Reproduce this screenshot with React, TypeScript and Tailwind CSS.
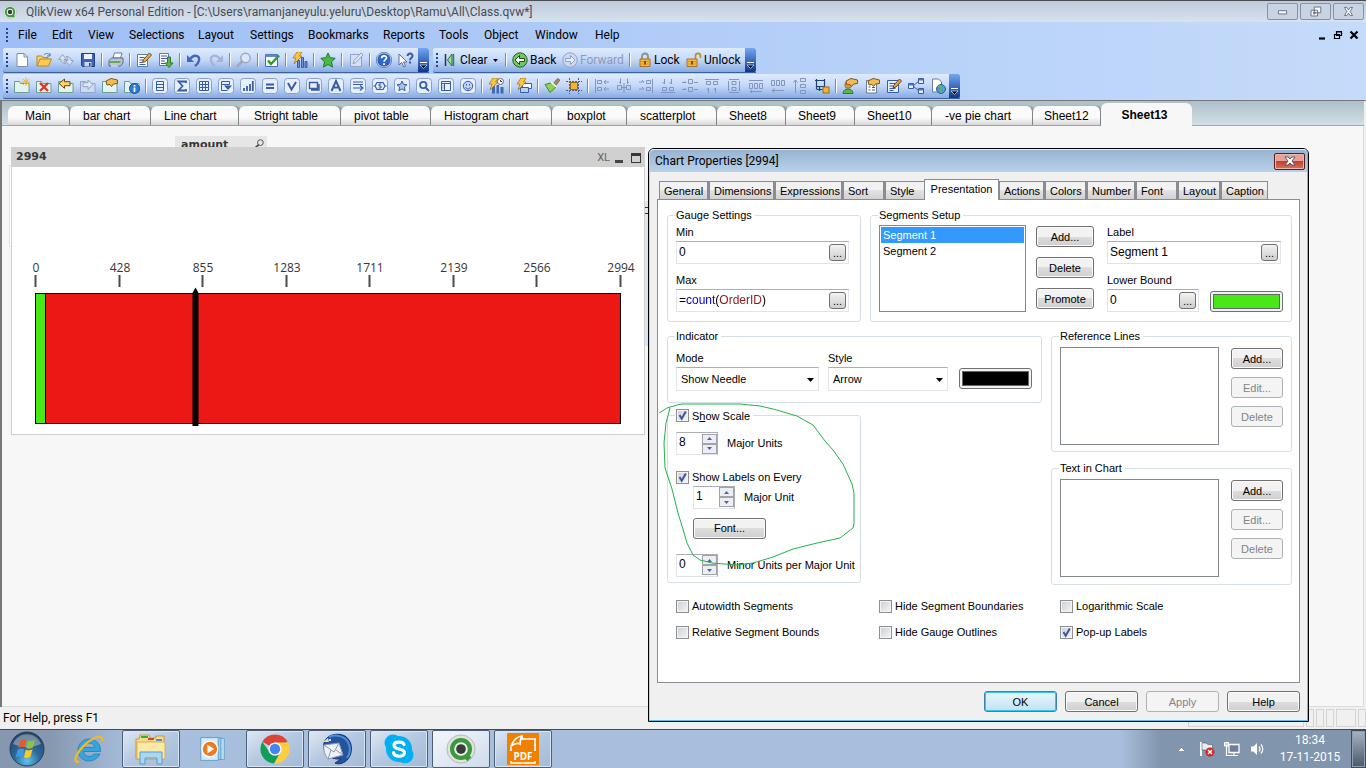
import React, { useState } from "react";

type Kids = { children?: React.ReactNode };

const UI = "font-['Roboto','Open_Sans',sans-serif]";
const SANS = "font-['Liberation_Sans',Arial,sans-serif]";

/* ---------- Icons ---------- */

function Svg({ children, s = "size-4" }: Kids & { s?: string }) {
  return (
    <svg viewBox="0 0 16 16" className={s} fill="none" aria-hidden="true">
      {children}
    </svg>
  );
}

function Boxed({ children }: Kids) {
  return (
    <Svg>
      <rect x="0.5" y="0.5" width="15" height="15" rx="3" fill="#e6effc" stroke="#8ba0c8" />
      {children}
    </Svg>
  );
}

const B = "#3a5ba8";
const D = "#8fa3c8";

const QlikLogo = ({ s = "size-4" }: { s?: string }) => (
  <svg viewBox="0 0 32 32" className={s} fill="none" aria-hidden="true">
    <circle cx="16" cy="16" r="15" fill="#dfe2df" stroke="#b2b6b2" />
    <path d="M19 21l6 6" stroke="#3a9a3c" strokeWidth="6" />
    <circle cx="16" cy="16" r="9.500" fill="#f4f4f4" stroke="#3a9a3c" strokeWidth="4.500" />
    <circle cx="16" cy="16" r="5.200" fill="#3c3c3c" />
  </svg>
);

const NewDoc = () => (
  <Svg>
    <path d="M3 1.500h7l3.500 3.500v9.500h-10.500z" fill="#fff" stroke="#7f8ea6" />
    <path d="M10 1.500v3.500h3.500" stroke="#7f8ea6" />
  </Svg>
);
const Open = () => (
  <Svg>
    <path d="M1 14V4h5l1 1.500h5V8" fill="#f5d27a" stroke="#b98a24" />
    <path d="M1 14l3-7h11.500l-3 7z" fill="#ffc94e" stroke="#b98a24" />
    <path d="M8 3c2-2.500 5-2 6 1m0-3v3h-3" stroke="#4d7fc4" />
  </Svg>
);
const Refresh = () => (
  <Svg>
    <path d="M0.500 7.500L4.500 2.500l4 5H6c0 2 .5 3 2 4-3 0-5-1.500-5-4z" fill="#dbe3f0" stroke={D} />
    <path d="M15.500 8.500l-4 5-4-5H10c0-2-.5-3-2-4 3 0 5 1.500 5 4z" fill="#dbe3f0" stroke={D} />
  </Svg>
);
const Save = () => (
  <Svg>
    <path d="M1.500 1.500h13v13h-12l-1-1z" fill="#3f63b5" stroke="#253f86" />
    <path d="M4 2h8v5H4z" fill="#eef3fb" />
    <path d="M4.500 10h7v4.500h-7z" fill="#cdd8ee" />
    <path d="M9 11h1.500v3H9z" fill="#253f86" />
  </Svg>
);
const Print = () => (
  <Svg>
    <path d="M5 6l1.500-5H14l-1.500 5z" fill="#fff" stroke="#6d7d95" />
    <path d="M1 8.500L3.500 6H15v5l-2.500 3H1z" fill="#b9c5d8" stroke="#5e6d85" />
    <path d="M1 9h11.500v2H1z" fill="#5fae4f" />
    <path d="M3 14h7" stroke="#fff" />
  </Svg>
);
const EditScript = () => (
  <Svg>
    <path d="M1.500 2.500h10v12h-10z" fill="#fff" stroke="#5d7bb5" />
    <path d="M3.500 5.500h5M3.500 8h4M3.500 10.500h3M3.500 12.500h6" stroke={B} />
    <path d="M6.500 10.500l1-3 6-6.500 2 2-6 6.500z" fill="#e7b445" stroke="#6b4a18" />
  </Svg>
);
const ExportDown = () => (
  <Svg>
    <path d="M1.500 1.500h9v12h-9z" fill="#fff" stroke="#5d7bb5" />
    <path d="M3 4h6M3 6.500h6M3 9h4M3 11.500h4" stroke={B} />
    <path d="M9.500 5h3v6h2.500l-4 4.500L7 11h2.500z" fill="#5fb34a" stroke="#2e7a25" />
  </Svg>
);
const Undo = () => (
  <Svg>
    <path d="M4 7c4-5.500 10-3.500 9 1.500-.4 2.500-2 4-4 5.500" stroke="#4467bd" strokeWidth="2.400" />
    <path d="M1 3v7h7z" fill="#4467bd" />
  </Svg>
);
const Redo = () => (
  <Svg>
    <path d="M12 7C8 1.500 2 3.500 3 8.500c.400 2.500 2 4 4 5.500" stroke="#a5b4d2" strokeWidth="2.200" />
    <path d="M15 3v7H8z" fill="#a5b4d2" />
  </Svg>
);
const Search = () => (
  <Svg>
    <circle cx="9.500" cy="6" r="4.700" fill="#dce8f8" stroke="#98a9c8" strokeWidth="1.500" />
    <path d="M6 9.500L1.500 14" stroke="#a9a6b4" strokeWidth="2.600" strokeLinecap="round" />
  </Svg>
);
const CheckBoxIcon = () => (
  <Svg>
    <path d="M1.500 2.500h12v12h-12z" fill="#fff" stroke="#4a6cb0" />
    <path d="M1.500 2.500h12V5h-12z" fill="#5f86cf" />
    <path d="M4 8.500l3 3.500 8-8.500" stroke="#2c9a2c" strokeWidth="2.500" />
  </Svg>
);
const Bolt = () => <path d="M5 0h5L7.500 4H10L2 12l2-6H1z" fill="#ffc53d" stroke="#a8781c" strokeWidth="0.800" />;
const QuickChart = () => (
  <Svg>
    <path d="M5.500 8.500h2v7h-2zM9.500 5.500h2v10h-2zM13 9.500h2v6h-2z" fill="#6f93d8" stroke={B} />
    <Bolt />
  </Svg>
);
const Star = () => (
  <Svg>
    <path d="M8 1l2.200 4.700 5 .6-3.700 3.500 1 5.200L8 12.500 3.500 15l1-5.200L.8 6.300l5-.6z" fill="#4db84a" stroke="#1f7a24" />
  </Svg>
);
const Note = () => (
  <Svg>
    <path d="M2.500 2.500h11v12h-11z" fill="#d6e1f3" stroke={D} />
    <path d="M5 12l1-3.500 7-7.500 2 2-7 7.500z" fill="#dfe7f4" stroke={D} />
  </Svg>
);
const HelpIcon = () => (
  <Svg>
    <circle cx="8" cy="8" r="7.200" fill="#2f66c4" stroke="#e6eefb" />
    <circle cx="8" cy="8" r="7.700" stroke="#4c618e" strokeWidth="0.700" />
    <path d="M5.600 6.300C5.700 3 10.600 3.200 10.400 6c-.1 1.600-2.400 1.800-2.400 3.800M8 11.200v1.800" stroke="#fff" strokeWidth="1.800" />
  </Svg>
);
const WhatsThis = () => (
  <Svg>
    <path d="M1 2v11l2.800-2.500 2 4.500 1.700-.8-2-4.200H9z" fill="#fff" stroke="#5c6f95" />
    <path d="M9.500 4c.2-3.500 5.500-3 5 .2-.3 1.800-2.500 2-2.500 4M12 9.500v2" stroke={B} strokeWidth="2" />
  </Svg>
);
const ClearIcon = () => (
  <Svg>
    <path d="M3.500 2v12" stroke="#333" strokeWidth="1.500" />
    <path d="M5.500 8l4.500-6v12z" fill="#9fe0a0" stroke="#2b6a38" />
    <path d="M11.500 2v12" stroke="#2f8a4c" strokeWidth="1.500" />
  </Svg>
);
const BackIcon = () => (
  <Svg>
    <circle cx="8" cy="8" r="7.200" fill="#6fc95e" stroke="#2a5c2a" />
    <path d="M3 8l4.500-4.500v3h5v3h-5v3z" fill="#fff" stroke="#1d4d1d" />
  </Svg>
);
const ForwardIcon = () => (
  <Svg>
    <circle cx="8" cy="8" r="7.200" fill="#cdd9ee" stroke={D} />
    <path d="M13 8L8.500 3.500v3h-5v3h5v3z" fill="#e6edf8" stroke={D} />
  </Svg>
);
const LockIcon = () => (
  <Svg>
    <path d="M5 7V4.500c0-4 6-4 6 0V7" stroke="#8a8f9a" strokeWidth="1.800" />
    <path d="M3 7h10v7.500H3z" fill="#f7b93a" stroke="#a8721a" />
    <path d="M3.500 9.500h9M3.500 12h9" stroke="#d8922a" />
    <path d="M8 9v3.500" stroke="#5b3c10" strokeWidth="1.600" />
  </Svg>
);
const UnlockIcon = () => (
  <Svg>
    <path d="M9.500 7V4c0-3.500 5-3.500 5 0v2" stroke="#c08b2a" strokeWidth="1.600" />
    <path d="M1 7h10v7.500H1z" fill="#f7b93a" stroke="#a8721a" />
    <path d="M1.500 9.500h9M1.500 12h9" stroke="#d8922a" />
    <path d="M6 9v3.500" stroke="#5b3c10" strokeWidth="1.600" />
  </Svg>
);

const Sheet = () => <path d="M0.500 14.500v-11h5l1 2h8.500v9z" fill="#e3f3ee" stroke="#6f9c94" />;
const AddSheet = () => (
  <Svg>
    <Sheet />
    <path d="M12 0v8M8 4h8M9.200 1.200l5.600 5.600M14.800 1.200L9.200 6.800" stroke="#f2b52a" />
  </Svg>
);
const DeleteSheet = () => (
  <Svg>
    <Sheet />
    <path d="M4 5l8 8M12 5l-8 8" stroke="#dc3a22" strokeWidth="2.400" />
  </Svg>
);
const PromoteSheet = () => (
  <Svg>
    <Sheet />
    <path d="M1 5.500L6.500 1v2.700H12v4H6.500v2.600z" fill="#ffd65c" stroke="#6b4a18" />
  </Svg>
);
const DemoteSheet = () => (
  <Svg>
    <path d="M0.500 14.500v-11h5l1 2h8.500v9z" fill="#cfdcf0" stroke={D} />
    <path d="M13 6.500L8 2v2.700H3v4h5v2.600z" fill="#dde6f4" stroke={D} />
  </Svg>
);
const Hand = () => <path d="M4 3l5-2.500 6.500 1.500v3.500l-4 .5-2 2.500-1.500-2L5 7z" fill="#f2bc52" stroke="#7c5718" />;
const SheetProps = () => (
  <Svg>
    <Sheet />
    <Hand />
  </Svg>
);
const SheetInfo = () => (
  <Svg>
    <Sheet />
    <circle cx="10.500" cy="10.500" r="5" fill="#2e7bd6" stroke="#1a4f96" />
    <path d="M10.500 7v1.500M10.500 9.500V14" stroke="#fff" strokeWidth="1.800" />
  </Svg>
);

const boxedIcons: [string, React.ReactNode][] = [
  ["List box", <path key="a" d="M4.500 3.500h7v9h-7zM4.500 6.500h7M4.500 9.500h7" stroke={B} />],
  ["Statistics box", <path key="a" d="M12 5V3.500H4.500L8.500 8l-4 4.500H12V11" stroke={B} strokeWidth="1.800" />],
  ["Table box", <path key="a" d="M3.500 3.500h9v9h-9zM3.500 6.500h9M3.500 9.500h9M6.500 3.500v9M9.500 3.500v9" stroke={B} />],
  ["Multi box", <g key="a"><path d="M3.500 3.500h8v3h-8zM3.500 6.500v6h6" stroke={B} /><path d="M6 7.500h8L10 12z" fill={B} /></g>],
  ["Chart", <path key="a" d="M4 13v-3M7 13V8M10 13V6M12.800 13V3" stroke={B} strokeWidth="1.800" />],
  ["Input box", <path key="a" d="M4 6.500h8M4 10h8" stroke={B} strokeWidth="1.800" />],
  ["Current selections", <path key="a" d="M4 5l3.500 6.500L12 4" stroke={B} strokeWidth="2" />],
  ["Button", <path key="a" d="M3.500 4.500h8v6h-8zM5 12h8V6" stroke={B} strokeWidth="1.400" />],
  ["Text object", <path key="a" d="M3.500 13L8 3l4.500 10M5.500 9.500h5" stroke={B} strokeWidth="2" />],
  ["Line arrow", <path key="a" d="M3 4h10M3 6.500h10M3 10h9M10 7.500l3 2.500-3 2.500" stroke={B} strokeWidth="1.200" />],
  ["Slider", <g key="a"><path d="M5 4.500h6l2 3.500-2 3.500H5L3 8zM1.500 8h1M13.500 8h1" stroke={B} strokeWidth="1.200" /><path d="M9.500 6H7v2h2v2H6.500" stroke={B} /></g>],
  ["Bookmark object", <path key="a" d="M8 3l1.500 3.300 3.500.4-2.600 2.400.7 3.600L8 10.900l-3.100 1.800.7-3.600L3 6.700l3.500-.4z" fill="#a9c2ee" stroke={B} />],
  ["Search object", <path key="a" d="M9.500 9.500L13 13M10.500 7a3.200 3.200 0 1 1-6.400 0 3.200 3.200 0 0 1 6.400 0z" stroke={B} strokeWidth="1.800" />],
  ["Container", <path key="a" d="M3.500 3.500h9v9h-9zM3.500 5.500h9M6.500 5.500v7M4.500 8h1M4.500 10h1" stroke={B} />],
  ["Custom object", <g key="a"><circle cx="8" cy="8" r="4.700" fill="#c3d5f3" stroke={B} /><path d="M5.500 9c1 2.500 4 2.500 5 0M6.500 6v1.500M9.500 6v1.500" stroke={B} /></g>],
];

const TimeChart = () => (
  <Svg>
    <path d="M4 8h3v7.500H4zM8.500 7h2.500v8.500H8.500zM12.500 9h3v6.500h-3z" fill="#3f68b8" />
    <circle cx="12.500" cy="3.500" r="3" fill="#fff" stroke="#666" />
    <path d="M12.500 2v1.500H14" stroke="#333" />
    <Bolt />
  </Svg>
);
const QuickWindow = () => (
  <Svg>
    <path d="M6.500 5.500h9v5h-9z" fill="#fff" stroke={B} />
    <path d="M4.500 9.500h8v5h-8z" fill="#bcd0f2" stroke={B} />
    <Bolt />
  </Svg>
);
const Brush = () => (
  <Svg>
    <path d="M9 6l4.500-5.500L16 2l-4.500 6z" fill="#a88a5a" stroke="#6b5a38" strokeWidth="0.700" />
    <path d="M1 6.500l5 8L12 9 8 4.500z" fill="#8bd05c" stroke="#3f8a2c" />
    <path d="M7 4l5.500 5" stroke="#fff" strokeWidth="1.500" />
  </Svg>
);
const DesignGrid = () => (
  <Svg>
    <path d="M3.500 0v16M12.500 0v16M0 3.500h16M0 12.500h16" stroke="#4a5f88" strokeDasharray="2 1" />
    <rect x="4.500" y="4.500" width="7" height="7" fill="#f3b13a" stroke="#9a6a16" />
  </Svg>
);

const alignPaths = [
  "M1.500 1v14M3.500 2.500h4v3h-4zM3.500 9.500h4v3h-4zM15 4H10l2-2M10 4l2 2M15 11H10l2-2M10 11l2 2",
  "M1.500 7.500h4v4h-4zM10.500 7.500h4v4h-4zM8 5v10M4.500 0.500v5l-1.500-1.500M11.500 0.500v5l1.500-1.500M5.500 9.500h5",
  "M14.500 1v14M8.500 2.500h4v3h-4zM8.500 9.500h4v3h-4zM1 4h5L4 2M1 11h5L4 9",
  "M1 14.500h14M2.500 9.500h4v3h-4zM9.500 9.500h4v3h-4zM4.500 1v5l-2-2M11.500 1v5l-2-2",
  "M6.500 1.500h4v4h-4zM6.500 9.500h4v4h-4zM0 4.500h4L2.500 3M0 11.500h4L2.500 10M16 4.500h-4M16 11.500h-4",
  "M1 1.500h14M2.500 3.500h4v3h-4zM9.500 3.500h4v3h-4zM4.500 15v-5l-2 2M11.500 15v-5l-2 2",
  "M3 1.500h10M3 14.500h10M6 3.500h4v3h-4zM6 9.500h4v3h-4zM2.500 3v10M13.500 3v10",
  "M1 2.500h14M1.500 5.500h3v5h-3zM6.500 5.500h3v5h-3zM11.500 5.500h3v5h-3zM2 13.500h12M4 12l-2 1.500L4 15",
  "M1.500 2.500h3v5h-3zM6.500 2.500h3v5h-3zM11.500 2.500h3v5h-3zM14 12.500H2M4.500 10.500l-2.500 2 2.500 2",
  "M3.500 15V2M1.500 4.500L3.500 2l2 2.500M8.500 0.500h5v3h-5zM8.500 6.500h5v3h-5zM8.500 12.500h5v3h-5z",
];

const LayoutIcon = () => (
  <Svg>
    <path d="M1 2.500h10M2.500 1v10M2.500 8.500h8M10.500 1v9M2.500 11.500h6M5.500 8v5" stroke="#20406f" strokeWidth="1.200" />
    <rect x="9" y="9" width="6" height="6" fill="#f3b13a" stroke="#9a6a16" />
  </Svg>
);
const UserPrefs = () => (
  <Svg>
    <circle cx="6" cy="7" r="3.200" fill="#f29a4a" stroke="#b0601c" />
    <path d="M1 15.500c0-6 10-6 10 0z" fill="#58b848" stroke="#2b7a24" />
    <Hand />
  </Svg>
);
const DocProps = () => (
  <Svg>
    <path d="M2.500 2.500h10v12.500h-10z" fill="#fff" stroke="#6d7d95" />
    <path d="M4.500 9h2M4.500 12h2M8 9.500h3M8 12h3" stroke={B} />
    <Hand />
  </Svg>
);
const ExpressionIcon = () => (
  <Svg>
    <path d="M1.500 2.500h11v12h-11z" fill="#e4edfb" stroke={B} />
    <path d="M3.500 5.500h6M3.500 8h4M3.500 10.500h6M3.500 12.500h4" stroke={B} />
    <path d="M7 10l1-3 5.500-6 2 2L10 9z" fill="#e7a04a" stroke="#6b4a18" />
  </Svg>
);
const TableViewer = () => (
  <Svg>
    <path d="M5 8l6-5M5 8l6 5" stroke={B} />
    <path d="M0.500 5.500h5v5h-5zM10.500 0.500h5v5h-5zM10.500 10.500h5v5h-5z" fill="#eaf1fc" stroke={B} />
    <path d="M1 6h4v1.500H1zM11 1h4v1.500h-4zM11 11h4v1.500h-4z" fill="#4a78d0" />
  </Svg>
);
const WebDoc = () => (
  <Svg>
    <path d="M2.500 1h6l3 3v10h-9z" fill="#fff" stroke="#6d7d95" />
    <circle cx="11" cy="11" r="4.500" fill="#4b93dd" stroke="#27609e" />
    <path d="M8 9c2-2 4-1 3 1s1 2 0 5M13 8.500c1 1 1 3 0 4" stroke="#5fc04f" strokeWidth="1.600" />
  </Svg>
);

/* ---------- Toolbar pieces ---------- */

function Tool({ label, children }: Kids & { label: string }) {
  return (
    <button type="button" aria-label={label} className="flex w-[22px] shrink-0 justify-center">
      {children}
    </button>
  );
}
const Sep = () => (
  <span className="flex w-[6px] shrink-0 justify-center">
    <span className="h-[14px] w-[2px] border-r border-white bg-[#6a8ccb]" />
  </span>
);
const Grip = () => (
  <span className="flex w-[8px] shrink-0 flex-col items-center gap-[2px]">
    {[0, 1, 2, 3].map((i) => (
      <span key={i} className="size-[2px] bg-[#27418a]" />
    ))}
  </span>
);
const Cap = () => (
  <button
    type="button"
    aria-label="Toolbar options"
    className="flex w-[11px] shrink-0 items-end justify-center self-stretch rounded-r-[2px] bg-linear-to-b from-[#75a6f1] to-[#0b3691] pb-[3px]"
  >
    <svg viewBox="0 0 7 7" className="size-[7px]" aria-hidden="true">
      <path d="M0 0h7v1H0z" fill="#fff" />
      <path d="M0 3h7L3.500 6.500z" fill="#000" stroke="#fff" strokeWidth="0.600" />
    </svg>
  </button>
);
const BAR =
  "flex h-[25px] items-center rounded-l-[2px] border-b border-[#3b619c] bg-linear-to-b from-[#dfebfd] via-[#c3d8f8] to-[#86aae3]";

const menus: [string, string][] = [
  ["File", "w-[34px]"],
  ["Edit", "w-[36px]"],
  ["View", "w-[41px]"],
  ["Selections", "w-[69px]"],
  ["Layout", "w-[52px]"],
  ["Settings", "w-[58px]"],
  ["Bookmarks", "w-[75px]"],
  ["Reports", "w-[56px]"],
  ["Tools", "w-[45px]"],
  ["Object", "w-[51px]"],
  ["Window", "w-[60px]"],
  ["Help", "w-[40px]"],
];

const sheets: [string, string][] = [
  ["Main", "w-[62px] pl-[17px]"],
  ["bar chart", "w-[81px] pl-[13px]"],
  ["Line chart", "w-[88px] pl-[13px]"],
  ["Stright table", "w-[102px] pl-[15px]"],
  ["pivot table", "w-[90px] pl-[13px]"],
  ["Histogram chart", "w-[121px] pl-[13px]"],
  ["boxplot", "w-[75px] pl-[15px]"],
  ["scatterplot", "w-[90px] pl-[13px]"],
  ["Sheet8", "w-[69px] pl-[12px]"],
  ["Sheet9", "w-[69px] pl-[12px]"],
  ["Sheet10", "w-[77px] pl-[12px]"],
  ["-ve pie chart", "w-[101px] pl-[13px]"],
  ["Sheet12", "w-[68px] pl-[11px]"],
];

/* ---------- Dialog controls ---------- */

function Btn({ children, w, disabled, primary }: Kids & { w: string; disabled?: boolean; primary?: boolean }) {
  const look = disabled
    ? "border-[#adb2b5] bg-[#f4f4f4] text-[#838383]"
    : primary
      ? "border-[#3c7fb1] bg-linear-to-b from-[#eaf6fd] to-[#bfe2f5] shadow-[inset_0_0_0_1px_#30c8f2] text-black"
      : "border-[#707070] bg-linear-to-b from-[#f2f2f2] from-50% via-[#dddddd] via-50% to-[#cfcfcf] shadow-[inset_0_0_0_1px_#fbfbfb] text-black";
  return (
    <button type="button" disabled={disabled} className={`h-[21px] shrink-0 rounded-[3px] border leading-[18px] ${look} ${w}`}>
      {children}
    </button>
  );
}

function Group({ title, className = "", children }: Kids & { title: React.ReactNode; className?: string }) {
  return (
    <fieldset className={`min-w-0 rounded-[3px] border border-[#d5dfe5] pl-[8px] ${className}`}>
      <legend className="-ml-px pr-[3px] pl-px leading-[12px]">{title}</legend>
      {children}
    </fieldset>
  );
}

function Check({ label, on }: { label: React.ReactNode; on?: boolean }) {
  return (
    <label className="flex items-center gap-[3px] whitespace-nowrap">
      <span className="relative size-[13px] shrink-0">
        <input
          type="checkbox"
          defaultChecked={on}
          className="peer block size-[13px] appearance-none border border-[#8e8f8f] bg-linear-to-br from-[#c9cfd6] to-[#f6f6f6] shadow-[inset_0_0_0_1px_#f4f4f4]"
        />
        <svg viewBox="0 0 13 13" className="pointer-events-none absolute inset-0 hidden size-[13px] peer-checked:block" fill="none" aria-hidden="true">
          <path d="M3.500 6l2.200 3.800L9.800 2.500" stroke="#3f579f" strokeWidth="2" />
        </svg>
      </span>
      <span>{label}</span>
    </label>
  );
}

function ExprField({ label, value, w, tint = "" }: { label: string; value: string; w: string; tint?: string }) {
  return (
    <div className={w}>
      <label htmlFor={label} className="block h-4 leading-4">
        {label}
      </label>
      <div className="mt-px flex h-[23px] items-center border border-[#e2e3ea] border-t-[#abadb3] bg-white pr-[2px]">
        <input
          id={label}
          defaultValue={value}
          className={`h-[19px] min-w-0 flex-1 pb-px pl-[2px] text-[12px] outline-none ${tint}`}
        />
        <button
          type="button"
          aria-label={`Edit ${label} expression`}
          className="flex size-[17px] items-end justify-center rounded-[3px] border border-[#707070] bg-linear-to-b from-[#f2f2f2] to-[#cfcfcf] pb-[3px] leading-[8px]"
        >
          ...
        </button>
      </div>
    </div>
  );
}

function Drop({ label, value, w }: { label: string; value: string; w: string }) {
  return (
    <label className={w}>
      <span className="block h-4 leading-4">{label}</span>
      <span className="relative mt-px block">
        <select className="block h-6 w-full appearance-none border border-[#e2e3ea] border-t-[#abadb3] bg-white pl-[4px] outline-none">
          <option>{value}</option>
        </select>
        <svg viewBox="0 0 7 4" className="pointer-events-none absolute top-[11px] right-[5px] h-[4px] w-[7px]" aria-hidden="true">
          <path d="M0 0h7L3.500 4z" fill="#000" />
        </svg>
      </span>
    </label>
  );
}

function Spin({ label, start }: { label: string; start: number }) {
  const [n, setN] = useState(start);
  const arrow = "flex h-[10px] w-[15px] items-center justify-center border border-[#a0a3aa] bg-[#eceef2]";
  return (
    <div className="flex items-center">
      <div className="flex h-[23px] w-[42px] items-center border border-[#e2e3ea] border-t-[#abadb3] border-r-[#abadb3]">
        <input
          id={label}
          inputMode="numeric"
          value={n}
          onChange={(e) => setN(Number(e.target.value) || 0)}
          className="h-[19px] min-w-0 flex-1 pb-[3px] pl-[2px] text-[12px] outline-none"
        />
        <span className="flex flex-col">
          <button type="button" aria-label={`Increase ${label}`} className={arrow} onClick={() => setN(n + 1)}>
            <svg viewBox="0 0 5 3" className="h-[3px] w-[5px]" aria-hidden="true">
              <path d="M0 3h5L2.500 0z" fill="#4a62b0" />
            </svg>
          </button>
          <button type="button" aria-label={`Decrease ${label}`} className={arrow} onClick={() => setN(n - 1)}>
            <svg viewBox="0 0 5 3" className="h-[3px] w-[5px]" aria-hidden="true">
              <path d="M0 0h5L2.500 3z" fill="#4a62b0" />
            </svg>
          </button>
        </span>
      </div>
      <label htmlFor={label} className="ml-[9px] whitespace-nowrap">
        {label}
      </label>
    </div>
  );
}

function Swatch({ label, tint }: { label: string; tint: string }) {
  return (
    <button
      type="button"
      aria-label={label}
      className="h-[21px] w-[73px] shrink-0 rounded-[3px] border border-[#707070] bg-[#f2f2f2] p-[2px]"
    >
      <span className={`block h-full border border-[#666] ${tint}`} />
    </button>
  );
}

function ListWithButtons({ title, className }: { title: string; className: string }) {
  return (
    <Group title={title} className={className}>
      <div className="flex pt-[5px]">
        <ul role="listbox" aria-label={title} className="h-[98px] w-[159px] border border-[#828790] bg-white" />
        <div className="mt-px ml-[12px] flex flex-col gap-[8px]">
          <Btn w="w-[52px]">Add...</Btn>
          <Btn w="w-[52px]" disabled>
            Edit...
          </Btn>
          <Btn w="w-[52px]" disabled>
            Delete
          </Btn>
        </div>
      </div>
    </Group>
  );
}

const propTabs: [string, string][] = [
  ["General", "w-[50px]"],
  ["Dimensions", "w-[66px]"],
  ["Expressions", "w-[68px]"],
  ["Sort", "w-[42px]"],
  ["Style", "w-[42px]"],
  ["Presentation", "w-[75px]"],
  ["Actions", "w-[46px]"],
  ["Colors", "w-[42px]"],
  ["Number", "w-[49px]"],
  ["Font", "w-[42px]"],
  ["Layout", "w-[43px]"],
  ["Caption", "w-[47px]"],
];

function ChartProperties() {
  const [seg, setSeg] = useState(0);
  return (
    <section
      role="dialog"
      aria-label="Chart Properties"
      className={`absolute top-[148px] left-[648px] w-[661px] rounded-t-[6px] border border-black bg-[#f0f0f0] text-[11px] text-black ${SANS}`}
    >
      <div className="rounded-t-[5px] border border-[#4cc8ec] border-t-[#e4eef8] border-l-[#b4d4f2]">
        <header className={`flex h-[22px] items-center justify-between rounded-t-[4px] bg-linear-to-b from-[#98b4d2] to-[#b9d1ea] pr-[2px] pl-[5px] text-[12px] ${UI}`}>
          <h2>Chart Properties [2994]</h2>
          <button
            type="button"
            aria-label="Close"
            className="flex h-[17px] w-[31px] items-center justify-center rounded-[2px] border border-[#5a1d18] bg-linear-to-b from-[#e6a296] from-45% via-[#c2402c] via-50% to-[#d4715a] shadow-[inset_0_0_0_1px_#eeb8ae]"
          >
            <svg viewBox="0 0 12 10" className="h-[10px] w-[12px]" aria-hidden="true">
              <path d="M1 1h3l2 2 2-2h3L8 5l3 4H8L6 7 4 9H1l3-4z" fill="#fff" stroke="#4c5068" strokeWidth="0.900" />
            </svg>
          </button>
        </header>

        <div role="tablist" className="mt-[7px] flex h-5 items-end pl-[9px]">
          {propTabs.map(([t, w]) =>
            t === "Presentation" ? (
              <button key={t} type="button" role="tab" aria-selected="true" className={`relative -mb-px -ml-[3px] h-[21px] border border-b-0 border-[#898c95] bg-white pb-[2px] ${w}`}>
                {t}
              </button>
            ) : (
              <button
                key={t}
                type="button"
                role="tab"
                aria-selected="false"
                className={`h-[18px] border border-r-2 border-b-0 border-[#898c95] bg-linear-to-b from-[#f2f2f2] from-50% via-[#e2e2e2] via-50% to-[#d2d2d2] pl-[4px] text-left leading-4 last:border-r ${w}`}
              >
                {t}
              </button>
            ),
          )}
        </div>

        <div role="tabpanel" className="mx-[7px] border border-[#898c95] bg-white pt-[9px] pr-[7px] pb-[42px] pl-[9px]">
          <div className="flex gap-[9px]">
            <Group title="Gauge Settings" className="w-[194px] pt-[3px] pb-[9px]">
              <div className="flex flex-col gap-[8px]">
                <ExprField label="Min" value="0" w="w-[173px]" />
                <ExprField
                  label="Max"
                  value="=count(OrderID)"
                  w="w-[173px]"
                  tint="bg-[linear-gradient(90deg,#000_9px,#0000e6_9px,#0000e6_39px,#000_39px,#000_43px,#8b1a1a_43px,#8b1a1a_86px,#000_86px)] bg-clip-text text-transparent"
                />
              </div>
            </Group>
            <Group title="Segments Setup" className="flex-1 pt-[3px]">
              <div className="flex">
                <ul role="listbox" aria-label="Segments" className="mt-px h-[87px] w-[147px] border border-[#828790] bg-white p-px">
                  {["Segment 1", "Segment 2"].map((s, i) => (
                    <li
                      key={s}
                      role="option"
                      aria-selected={seg === i}
                      onClick={() => setSeg(i)}
                      className={`h-4 pl-[2px] leading-4 ${seg === i ? "bg-[#3399ff] text-white" : ""}`}
                    >
                      {s}
                    </li>
                  ))}
                </ul>
                <div className="mt-[2px] ml-[10px] flex flex-col gap-[10px]">
                  <Btn w="w-[58px]">Add...</Btn>
                  <Btn w="w-[58px]">Delete</Btn>
                  <Btn w="w-[58px]">Promote</Btn>
                </div>
                <div className="ml-[13px] flex flex-col gap-[8px]">
                  <ExprField label="Label" value="Segment 1" w="w-[174px]" />
                  <div className="flex items-end gap-[11px]">
                    <ExprField label="Lower Bound" value="0" w="w-[92px]" />
                    <Swatch label="Segment color" tint="bg-[#47e815]" />
                  </div>
                </div>
              </div>
            </Group>
          </div>

          <div className="mt-[8px] flex gap-[9px]">
            <div className="flex flex-1 flex-col gap-[6px]">
              <Group title="Indicator" className="pt-[8px] pb-[11px]">
                <div className="flex items-end">
                  <Drop label="Mode" value="Show Needle" w="w-[143px]" />
                  <div className="ml-[9px]">
                    <Drop label="Style" value="Arrow" w="block w-[120px]" />
                  </div>
                  <div className="mb-[2px] ml-[11px] flex">
                    <Swatch label="Indicator color" tint="bg-black" />
                  </div>
                </div>
              </Group>
              <Group
                className="w-[194px] pt-[10px] pb-[5px]"
                title={<Check on label={<>S<u>h</u>ow Scale</>} />}
              >
                <Spin label="Major Units" start={8} />
                <div className="mt-[14px]">
                  <Check on label="Show Labels on Every" />
                </div>
                <div className="ml-[17px] flex flex-col gap-[9px]">
                  <Spin label="Major Unit" start={1} />
                  <Btn w="w-[73px]">Font...</Btn>
                </div>
                <div className="mt-[15px]">
                  <Spin label="Minor Units per Major Unit" start={0} />
                </div>
              </Group>
            </div>
            <div className="flex w-[241px] flex-col gap-[10px]">
              <ListWithButtons title="Reference Lines" className="pb-[6px]" />
              <ListWithButtons title="Text in Chart" className="pb-[7px]" />
            </div>
          </div>

          <div className="mt-[13px] grid grid-cols-[203px_181px_1fr] gap-y-[10px] pl-[9px] leading-4">
            <Check label="Autowidth Segments" />
            <Check label="Hide Segment Boundaries" />
            <Check label="Logarithmic Scale" />
            <Check label="Relative Segment Bounds" />
            <Check label="Hide Gauge Outlines" />
            <Check label="Pop-up Labels" on />
          </div>
        </div>

        <footer className="flex justify-end gap-[8px] px-[7px] py-[8px]">
          <Btn w="w-[73px]" primary>
            OK
          </Btn>
          <Btn w="w-[73px]">Cancel</Btn>
          <Btn w="w-[73px]" disabled>
            Apply
          </Btn>
          <Btn w="w-[73px]">Help</Btn>
        </footer>
      </div>

      <svg viewBox="0 0 200 170" className="pointer-events-none absolute top-[252px] left-[7px] h-[170px] w-[200px]" fill="none" aria-hidden="true">
        <path
          d="M3 12L11 7l10-3 5-1h58l20 2 13 3 24 7 16 9 12 16 8 9 10 14 9 20 2 9v30l-1 5-13 10-23 5-24 6-20 8-20 6-16 2-25-2-12-3-7-5-6-12-5-17-4-13-6-24-7-21-1-25 2-20 4-15"
          stroke="#22b14c"
          strokeWidth="1"
        />
      </svg>
    </section>
  );
}

/* ---------- Gauge window ---------- */

const ticks = [
  [23, "0"],
  [107, "428"],
  [190, "855"],
  [274, "1283"],
  [357, "1711"],
  [441, "2139"],
  [524, "2566"],
  [608, "2994"],
] as const;

function GaugeWindow() {
  return (
    <section
      aria-label="Gauge chart"
      className="absolute top-[21px] left-[9px] w-[634px] border border-[#d0d0d0] bg-white text-[#363636]"
    >
      <header className="flex h-[19px] items-center justify-between bg-[#d0d0d0] pr-[3px] pl-[4px]">
        <h2 className="font-['DejaVu_Sans',Verdana,sans-serif] text-[11px] font-bold">2994</h2>
        <div className="flex items-center gap-[5px]">
          <button type="button" className={`text-[11px] leading-[12px] text-[#666] ${UI}`}>
            XL
          </button>
          <button type="button" aria-label="Minimize" className="flex h-[11px] w-[8px] items-end">
            <span className="h-[3px] w-[8px] bg-[#444]" />
          </button>
          <button type="button" aria-label="Maximize" className="ml-[3px] h-[10px] w-[10px] border border-t-[3px] border-[#363636]" />
        </div>
      </header>
      <svg viewBox="0 0 632 267" className="block h-[267px] w-full font-['Open_Sans','Noto_Sans',sans-serif] text-[12px]" aria-label="Gauge from 0 to 2994">
        {ticks.map(([x, label]) => (
          <g key={label}>
            <text x={x + 1} y="105" textAnchor="middle" fill="#363636">
              {label}
            </text>
            <path d={`M${x + 0.5} 108v12`} stroke="#4a4a4a" strokeWidth="2" />
          </g>
        ))}
        <rect x="23.500" y="126.500" width="585" height="130" fill="#eb1816" stroke="#000" />
        <rect x="23.500" y="126.500" width="10" height="130" fill="#47e815" stroke="#000" />
        <path d="M180.500 259V126l3-5.500 3 5.500v133z" fill="#000" />
      </svg>
    </section>
  );
}

/* ---------- Taskbar ---------- */

const TB = "flex h-full w-[58px] shrink-0 items-center justify-center";
const TB_OPEN = "rounded-[2px] border border-[#4d5f78] bg-linear-to-br from-[#dfe8f3] via-[#b3c7e0] to-[#a3bbd8] shadow-[inset_0_0_0_1px_#d9e5f3]";

const StartOrb = () => (
  <svg viewBox="0 0 36 36" className="size-9" aria-hidden="true">
    <defs>
      <radialGradient id="orb" cx="50%" cy="85%" r="75%">
        <stop offset="0" stopColor="#5fc4ea" />
        <stop offset="0.500" stopColor="#2c6a9c" />
        <stop offset="1" stopColor="#27486e" />
      </radialGradient>
    </defs>
    <circle cx="18" cy="18" r="17" fill="url(#orb)" stroke="#2a3d55" />
    <path d="M4 13c5-13 23-13 28 0-9 4-19 4-28 0z" fill="#fff" opacity=".35" />
    <path d="M11 10c2-2 4-2.200 6.500-1l-1.800 7.500c-2.500-1.200-4.500-1-6.700.8z" fill="#e8592b" />
    <path d="M19 9.500c2.500 1.200 4.500 1 7-.7l-2 7.500c-2.400 1.700-4.400 1.800-6.800.7z" fill="#8cc63f" />
    <path d="M8.500 19c2.200-1.800 4.200-2 6.700-.8L13.300 26c-2.500-1.200-4.500-1-6.600.8z" fill="#3a9be0" />
    <path d="M16.800 18.700c2.400 1.100 4.400 1 6.800-.7l-2 7.500c-2.400 1.700-4.300 1.900-6.700.8z" fill="#fcc72c" />
  </svg>
);
const IE = () => (
  <svg viewBox="0 0 32 32" className="size-8" fill="none" aria-hidden="true">
    <path d="M27 21c-2 4-6 7-11 7C9.500 28 5 23 5 17S10 6 16 6c7 0 12 5 11.500 12.500H10.500c.3 3 2.500 5 5.500 5 2.300 0 4-.8 5-2.500zM10.600 14.500h11C21.300 11.800 19 10 16 10s-5 1.800-5.400 4.500z" fill="#35a5e2" fillRule="evenodd" stroke="#1878b8" strokeWidth="0.700" />
    <path d="M29 8c1-3-.5-4.500-3.500-4C17 5 5 17 2.500 25c-.9 3 .5 4.500 3.500 3.500" stroke="#f5b921" strokeWidth="2.200" />
  </svg>
);
const Explorer = () => (
  <svg viewBox="0 0 34 34" className="size-[34px]" fill="none" aria-hidden="true">
    <path d="M2 27V7h3l1-4h9l1 3h6v-2h8v23z" fill="#f6dd8c" stroke="#c69c3b" />
    <path d="M7 4h7v2H7z" fill="#2fae3e" />
    <path d="M14 6h6v2h-6z" fill="#d8472f" />
    <path d="M22 7h6v2h-6z" fill="#4a8ee0" />
    <path d="M3 10h28v17H3z" fill="#fbe9a9" stroke="#d5ae4e" />
    <path d="M6 32V20h22v12h-5v-6H11v6z" fill="#a9d8f2" stroke="#5a9ac6" />
  </svg>
);
const MediaPlayer = () => (
  <svg viewBox="0 0 32 32" className="size-7" fill="none" aria-hidden="true">
    <path d="M12 4h17v24H12z" fill="#b8dcf4" stroke="#6aa3cc" />
    <path d="M8 3h17v25H8z" fill="#9accee" stroke="#5a9ac8" />
    <path d="M2 3h20v26H2z" fill="#d3eafa" stroke="#5a9ac8" />
    <circle cx="12.500" cy="16" r="9" fill="#f0781e" stroke="#fff" strokeWidth="1.500" />
    <path d="M9.500 11v10l8-5z" fill="#fff" />
  </svg>
);
const Chrome = () => (
  <svg viewBox="0 0 30 30" className="size-[30px]" aria-hidden="true">
    <path d="M15 15L2.400 7.700A14.500 14.500 0 0 1 27.600 7.700z" fill="#db4437" />
    <path d="M15 8.500h13A14.500 14.500 0 0 1 14 29.500L20.600 18.200z" fill="#ffcd40" />
    <path d="M2.400 7.700L9.400 18.200 15 21.500l4-1-5 9A14.500 14.500 0 0 1 2.400 7.700z" fill="#0f9d58" />
    <circle cx="15" cy="15" r="6.600" fill="#fff" />
    <circle cx="15" cy="15" r="5.200" fill="#4285f4" />
  </svg>
);
const Thunderbird = () => (
  <svg viewBox="0 0 34 34" className="size-[34px]" fill="none" aria-hidden="true">
    <path d="M4 11C6 3 17 0 25 4c8 5 8 17 3 23-3 4-9 6-13 4l6-4C9 28 2 20 4 11z" fill="#24549f" stroke="#12336a" />
    <path d="M9 5c7-3 15-1 19 5 3 6 2 12-1 16" stroke="#4f8fd8" strokeWidth="2" />
    <path d="M4 13l15-2 4 12-15 4C5 23 3 18 4 13z" fill="#eef2f8" stroke="#8a97ad" />
    <path d="M4 13l10 7 5-9M8 27l3-9M23 23l-7-5" stroke="#8a97ad" />
    <circle cx="10" cy="8" r="1" fill="#fff" />
    <path d="M3 10l5-4 1 4z" fill="#f1d9a0" />
  </svg>
);
const Skype = () => (
  <svg viewBox="0 0 32 32" className="size-8" aria-hidden="true">
    <circle cx="10" cy="10" r="8.500" fill="#00aff0" />
    <circle cx="22" cy="22" r="8.500" fill="#00aff0" />
    <circle cx="16" cy="16" r="13" fill="#00aff0" />
    <path d="M21 11.500C20 8.500 11 8 11 12.500c0 4.500 10.500 2.500 10.500 7.200 0 5-10.500 4.500-11-.2" fill="none" stroke="#fff" strokeWidth="3.200" strokeLinecap="round" />
  </svg>
);
const Pdf = () => (
  <svg viewBox="0 0 32 32" className="size-8" fill="none" aria-hidden="true">
    <rect width="32" height="32" rx="1" fill="#f08000" />
    <path d="M4 18v-5C6 8 10 3.500 15 3v3h13v12M4 28v2h24v-2M4 13c3-2 7-3 9-2 0-3 1-6 2-8" stroke="#fff" strokeWidth="1.700" />
    <text x="16" y="27" textAnchor="middle" fill="#fff" fontSize="10" fontWeight="bold" fontFamily="Open Sans, sans-serif">
      PDF
    </text>
  </svg>
);

const tray: [string, React.ReactNode][] = [
  ["Show hidden icons", <svg key="a" viewBox="0 0 9 5" className="h-[5px] w-[9px]"><path d="M0.500 4.500h8L4.500 0.500z" fill="#fff" stroke="#56657a" strokeWidth="0.500" /></svg>],
  ["Action center", <Svg key="a"><path d="M2 1v14" stroke="#fff" strokeWidth="2" /><path d="M3 2h4l2 1.500h4.500v7H8.500L7 9H3z" fill="#e9eef4" stroke="#4b5768" strokeWidth="0.600" /><circle cx="11" cy="11" r="4.500" fill="#d8261c" /><path d="M9 9l4 4M13 9l-4 4" stroke="#fff" strokeWidth="1.500" /></Svg>],
  ["Network", <Svg key="a"><path d="M5 3.500h10v8H5z" fill="#6f8096" stroke="#fff" strokeWidth="1.300" /><path d="M6 14.500h8M10 12v2M2.500 5v9.500H6" stroke="#fff" strokeWidth="1.200" /><path d="M0.500 1.500h4V5h-4z" fill="#cfd8e2" stroke="#fff" /></Svg>],
  ["Volume", <Svg key="a"><path d="M2 5.500h2.500L8 2v12l-3.500-3.500H2z" fill="#fff" /><path d="M10 5.500c1.200 1.500 1.200 3.500 0 5M12 3.500c2.300 2.500 2.300 6.500 0 9" stroke="#fff" strokeWidth="1.200" /></Svg>],
];

/* ---------- Page ---------- */

export default function App() {
  return (
    <div className={`relative flex h-screen flex-col overflow-hidden bg-[#f0f0f0] text-[12px] text-black ${UI}`}>
      <header className="flex h-[22px] shrink-0 items-center border-t border-[#4a4d52] bg-linear-to-b from-[#bfcbdb] to-[#d7e2ef] pl-[3px]">
        <QlikLogo s="size-[14px]" />
        <h1 className="ml-[9px] flex-1 truncate text-[#444c56]">
          QlikView x64 Personal Edition - [C:\Users\ramanjaneyulu.yeluru\Desktop\Ramu\All\Class.qvw*]
        </h1>
        <div className="flex gap-[2px] pr-[2px]">
          {[
            ["Minimize", <path key="a" d="M3 7h10v4H3z" />],
            ["Restore", <path key="a" d="M6.500 2.500h8v7h-8zM2.500 6.500h8v7h-8zM5.500 9h2v2h-2z" />],
            ["Close", <path key="a" d="M3 3h3l2 3 2-3h3L10 8l3 5h-3l-2-3-2 3H3l3-5z" />],
          ].map(([label, g]) => (
            <button
              key={label as string}
              type="button"
              aria-label={label as string}
              className="flex h-[17px] w-[31px] items-center justify-center rounded-[2px] border border-[#8492a8] bg-[#c9d4e3]"
            >
              <svg viewBox="0 0 16 16" className="size-[13px]" fill="#f6f8fb" stroke="#566072" aria-hidden="true">
                {g}
              </svg>
            </button>
          ))}
        </div>
      </header>

      <div className="shrink-0 bg-linear-to-r from-[#9ebef5] to-[#c5dbfa] pl-[3px]">
        <nav className="flex h-[26px] items-center">
          <Grip />
          <div className="flex flex-1 pl-[7px]">
            {menus.map(([m, w]) => (
              <button key={m} type="button" className={`text-left ${w}`}>
                {m}
              </button>
            ))}
          </div>
          <div className="flex gap-[6px] pr-[7px] pb-px">
            {[
              ["Minimize sheet", "M2 8.500h6"],
              ["Restore sheet", "M3.500 1.500h5v4h-5zM1.500 4.500h5v4h-5zM3 2h6"],
              ["Close sheet", "M1.500 1.500l7 7M8.500 1.500l-7 7"],
            ].map(([label, d]) => (
              <button key={label} type="button" aria-label={label}>
                <svg viewBox="0 0 10 10" className="size-[10px]" aria-hidden="true">
                  <path d={d} fill="none" stroke="#000" strokeWidth={label === "Restore sheet" ? 1.2 : 2.2} />
                </svg>
              </button>
            ))}
          </div>
        </nav>

        <div className="flex gap-[4px]">
          <div className={BAR}>
            <Grip />
            <div className="flex items-center pr-px">
              <Tool label="New"><NewDoc /></Tool>
              <Tool label="Open"><Open /></Tool>
              <Tool label="Refresh"><Refresh /></Tool>
              <Tool label="Save"><Save /></Tool>
              <Sep />
              <Tool label="Print"><Print /></Tool>
              <Sep />
              <Tool label="Edit script"><EditScript /></Tool>
              <Tool label="Reload"><ExportDown /></Tool>
              <Sep />
              <Tool label="Undo"><Undo /></Tool>
              <Tool label="Redo"><Redo /></Tool>
              <Sep />
              <Tool label="Search"><Search /></Tool>
              <Sep />
              <Tool label="Current selections"><CheckBoxIcon /></Tool>
              <Sep />
              <Tool label="Quick chart"><QuickChart /></Tool>
              <Sep />
              <Tool label="Add bookmark"><Star /></Tool>
              <Sep />
              <Tool label="Notes"><Note /></Tool>
              <Sep />
              <Tool label="Help topics"><HelpIcon /></Tool>
              <Tool label="Context help"><WhatsThis /></Tool>
            </div>
            <Cap />
          </div>
          <div className={BAR}>
            <Grip />
            <button type="button" className="flex w-[62px] items-center gap-[2px] pl-px">
              <ClearIcon />
              Clear
              <svg viewBox="0 0 5 3" className="ml-[3px] h-[3px] w-[5px]" aria-hidden="true">
                <path d="M0 0h5L2.500 3z" fill="#000" />
              </svg>
            </button>
            <Sep />
            <button type="button" className="flex w-[50px] items-center gap-[2px] pl-[3px]">
              <BackIcon />
              Back
            </button>
            <button type="button" disabled className="flex w-[68px] items-center gap-[2px] pl-[3px] text-[#8d9bb5]">
              <ForwardIcon />
              Forward
            </button>
            <Sep />
            <button type="button" className="flex w-[50px] items-center gap-px pl-[4px]">
              <LockIcon />
              Lock
            </button>
            <button type="button" className="flex w-[62px] items-center gap-[2px] pl-[3px]">
              <UnlockIcon />
              Unlock
            </button>
            <Cap />
          </div>
        </div>

        <div className="flex pt-px pb-px">
          <div className={BAR}>
            <Grip />
            <Tool label="Add sheet"><AddSheet /></Tool>
            <Tool label="Remove sheet"><DeleteSheet /></Tool>
            <Tool label="Promote sheet"><PromoteSheet /></Tool>
            <Tool label="Demote sheet"><DemoteSheet /></Tool>
            <Tool label="Sheet properties"><SheetProps /></Tool>
            <Tool label="Sheet info"><SheetInfo /></Tool>
            <Sep />
            {boxedIcons.map(([label, g]) => (
              <Tool key={label} label={label}>
                <Boxed>{g}</Boxed>
              </Tool>
            ))}
            <Sep />
            <Tool label="Time chart"><TimeChart /></Tool>
            <Sep />
            <Tool label="Quick window"><QuickWindow /></Tool>
            <Sep />
            <Tool label="Format painter"><Brush /></Tool>
            <Tool label="Design grid"><DesignGrid /></Tool>
            <Sep />
            {alignPaths.map((d, i) => (
              <Tool key={i} label={`Align ${i + 1}`}>
                <Svg>
                  <path d={d} stroke="#8195bf" />
                </Svg>
              </Tool>
            ))}
            <Tool label="Layout"><LayoutIcon /></Tool>
            <Sep />
            <Tool label="User preferences"><UserPrefs /></Tool>
            <Tool label="Document properties"><DocProps /></Tool>
            <Tool label="Expression overview"><ExpressionIcon /></Tool>
            <Tool label="Table viewer"><TableViewer /></Tool>
            <Tool label="Web view"><WebDoc /></Tool>
            <Cap />
          </div>
        </div>
      </div>

      <div className="flex min-h-0 flex-1 flex-col border-t border-l-2 border-[#777] bg-[#f0f0f0] pr-[2px]">
        <div role="tablist" className={`flex h-[25px] shrink-0 items-end border-b border-[#a3a8ab] bg-linear-to-b from-[#aebfc9] to-[#d3dfe5] pl-[6px] ${SANS}`}>
          {sheets.map(([s, w]) => (
            <button
              key={s}
              type="button"
              role="tab"
              aria-selected="false"
              className={`h-[19px] shrink-0 rounded-t-[6px] border-r border-[#7d8588] bg-linear-to-b from-[#fbfbfb] from-60% to-[#d8d8d8] text-left shadow-[2px_0_2px_#8a949a] ${w}`}
            >
              {s}
            </button>
          ))}
          <button type="button" role="tab" aria-selected="true" className="relative -mb-px h-[23px] w-[91px] shrink-0 rounded-t-[6px] bg-[#f7f7f7] pr-[4px] font-bold">
            Sheet13
          </button>
        </div>

        <main className="relative min-h-0 flex-1 overflow-hidden border-r border-b border-[#dcdcdc] bg-[#f7f7f7]">
          <div className="absolute top-[10px] left-[173px] flex h-[20px] w-[92px] justify-between bg-[#e6e6e6] pt-px pr-[3px] pl-[6px] font-['DejaVu_Sans',Verdana,sans-serif] text-[11px] font-bold text-[#363636]">
            amount
            <svg viewBox="0 0 10 10" className="mt-[2px] size-[9px]" fill="none" aria-hidden="true">
              <circle cx="6" cy="4" r="3.200" stroke="#444" />
              <path d="M4 6.500L0.500 9.500" stroke="#444" strokeWidth="1.800" />
            </svg>
          </div>
          <div className="absolute top-[39px] left-[7px] h-[82px] w-[20px] border border-[#e2e2e2] bg-white" />
          <div className="absolute top-[75px] left-[635px] h-[145px] w-[20px] bg-linear-to-b from-[#e6e6e6] from-[18px] to-[#d4e6fa] to-[18px]">
            <div className="pt-[6px]">
              <div className="h-[7px] border-y border-[#333]" />
            </div>
          </div>
          <GaugeWindow />
        </main>
      </div>

      <footer className="flex h-[22px] shrink-0 items-center justify-between pl-[3px]">
        <span>For Help, press F1</span>
        <div className="flex gap-[2px]">
          <span className="h-[18px] w-[116px] border border-[#d4d4d4]" />
          <span className="h-[18px] w-[8px] border border-[#d4d4d4]" />
          <span className="h-[18px] w-[8px] border border-[#d4d4d4]" />
          <span className="h-[18px] w-[8px] border border-[#d4d4d4]" />
          <span className="h-[18px] w-[20px] border border-[#d4d4d4]" />
          <span className="h-[18px] w-[8px] border border-[#d4d4d4]" />
        </div>
      </footer>

      <div className="flex h-[39px] shrink-0 items-center gap-[4px] border-t border-[#3f4c5e] bg-[linear-gradient(90deg,#8698b0_0,#8698b0_50px,#a7bfdc_130px)]">
        <button type="button" aria-label="Start" className="flex w-[56px] justify-center pr-[2px]">
          <StartOrb />
        </button>
        <button type="button" aria-label="Internet Explorer" className={TB}><IE /></button>
        <button type="button" aria-label="File Explorer" className={`${TB} ${TB_OPEN}`}><Explorer /></button>
        <button type="button" aria-label="Media Player" className={TB}><MediaPlayer /></button>
        <button type="button" aria-label="Chrome" className={`${TB} ${TB_OPEN}`}><Chrome /></button>
        <button type="button" aria-label="Thunderbird" className={`${TB} ${TB_OPEN}`}><Thunderbird /></button>
        <button type="button" aria-label="Skype" className={`${TB} ${TB_OPEN}`}><Skype /></button>
        <button type="button" aria-label="QlikView" className={`${TB} rounded-[2px] border border-[#4d5f78] bg-linear-to-br from-[#f4f7fb] to-[#cfdcec]`}>
          <QlikLogo s="size-[30px]" />
        </button>
        <button type="button" aria-label="PDF reader" className={`${TB} ${TB_OPEN}`}><Pdf /></button>
        <div className="ml-auto flex h-full items-center bg-linear-to-r from-transparent to-[#8195ac] to-[40px] pl-[48px]">
          {tray.map(([label, g]) => (
            <button key={label} type="button" aria-label={label} className="flex w-[25px] justify-center">
              {g}
            </button>
          ))}
          <div className="w-[82px] text-center leading-[17px] text-white">
            <div>18:34</div>
            <div>17-11-2015</div>
          </div>
          <button type="button" aria-label="Show desktop" className="h-full w-[15px] border border-[#3f4c5e] bg-linear-to-b from-[#a8b4c2] to-[#4b5a6c] shadow-[inset_0_0_0_1px_#8f9fb2]" />
        </div>
      </div>

      <ChartProperties />
    </div>
  );
}
